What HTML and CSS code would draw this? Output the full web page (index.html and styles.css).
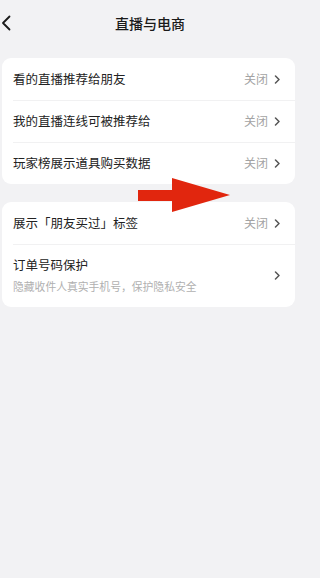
FILE: index.html
```html
<!DOCTYPE html>
<html lang="zh">
<head>
<meta charset="utf-8">
<link rel="stylesheet" href="styles.css">
</head>
<body>
<div class="page">
  <header class="topbar">
    <svg class="back" width="10" height="16" viewBox="0 0 10 16"><path d="M8.5 1.5 L2 8 L8.5 14.5" fill="none" stroke="#1a1a1a" stroke-width="1.8" stroke-linecap="round" stroke-linejoin="round"/></svg>
    <h1 class="title">直播与电商</h1>
  </header>
  <main class="content">
    <section class="card">
      <div class="row">
        <span class="label">看的直播推荐给朋友</span>
        <span class="value">关闭</span>
        <svg class="chev" width="7" height="9" viewBox="0 0 7 9"><path d="M1.5 1 L5 4.5 L1.5 8" fill="none" stroke="#555" stroke-width="1.5" stroke-linecap="round" stroke-linejoin="round"/></svg>
      </div>
      <div class="row">
        <span class="label">我的直播连线可被推荐给</span>
        <span class="value">关闭</span>
        <svg class="chev" width="7" height="9" viewBox="0 0 7 9"><path d="M1.5 1 L5 4.5 L1.5 8" fill="none" stroke="#555" stroke-width="1.5" stroke-linecap="round" stroke-linejoin="round"/></svg>
      </div>
      <div class="row">
        <span class="label">玩家榜展示道具购买数据</span>
        <span class="value">关闭</span>
        <svg class="chev" width="7" height="9" viewBox="0 0 7 9"><path d="M1.5 1 L5 4.5 L1.5 8" fill="none" stroke="#555" stroke-width="1.5" stroke-linecap="round" stroke-linejoin="round"/></svg>
      </div>
    </section>
    <section class="card">
      <div class="row">
        <span class="label">展示「朋友买过」标签</span>
        <span class="value">关闭</span>
        <svg class="chev" width="7" height="9" viewBox="0 0 7 9"><path d="M1.5 1 L5 4.5 L1.5 8" fill="none" stroke="#555" stroke-width="1.5" stroke-linecap="round" stroke-linejoin="round"/></svg>
      </div>
      <div class="row row-tall">
        <div class="texts">
          <span class="label">订单号码保护</span>
          <span class="sub">隐藏收件人真实手机号，保护隐私安全</span>
        </div>
        <svg class="chev" width="7" height="9" viewBox="0 0 7 9"><path d="M1.5 1 L5 4.5 L1.5 8" fill="none" stroke="#555" stroke-width="1.5" stroke-linecap="round" stroke-linejoin="round"/></svg>
      </div>
    </section>
  </main>
  <svg class="pointer" width="94" height="36" viewBox="0 0 94 36"><path d="M0 12 H34 V0 L92 17 L34 34 V23 H0 Z" fill="#e1260e"/></svg>
</div>
</body>
</html>
```
FILE: styles.css
```css
html, body {
  margin: 0;
  padding: 0;
}
body {
  background: #f2f2f4;
  font-family: "Noto Sans CJK SC", "Noto Sans", sans-serif;
  color: #1f1f1f;
}
.page {
  position: relative;
  width: 300px;
  height: 578px;
  overflow: hidden;
}
.topbar {
  height: 46px;
  display: flex;
  align-items: center;
  justify-content: center;
  position: relative;
}
.back {
  position: absolute;
  left: 1px;
  top: 15px;
}
.title {
  margin: 0;
  font-size: 14px;
  font-weight: 500;
  color: #1a1a1a;
  line-height: 1;
}
.content {
  padding: 12px 5px 0 2px;
  display: flex;
  flex-direction: column;
  gap: 18px;
}
.card {
  background: #fff;
  border-radius: 9px;
  overflow: hidden;
}
.row {
  height: 42px;
  display: flex;
  align-items: center;
  padding: 0 14px 0 11px;
  position: relative;
}
.row + .row::before {
  content: "";
  position: absolute;
  left: 11px;
  right: 0;
  top: 0;
  border-top: 1px solid #f1f1f2;
}
.row-tall {
  height: 63px;
}
.label {
  flex: 1;
  font-size: 12.5px;
  color: #222;
  line-height: 1;
}
.value {
  font-size: 12px;
  color: #a3a3a3;
  margin-right: 6px;
  line-height: 1;
}
.chev {
  display: block;
  flex: none;
}
.texts {
  flex: 1;
  display: flex;
  flex-direction: column;
  gap: 9px;
}
.sub {
  font-size: 10.8px;
  color: #b0b0b0;
  line-height: 1;
}
.pointer {
  position: absolute;
  left: 138px;
  top: 178px;
}
```
